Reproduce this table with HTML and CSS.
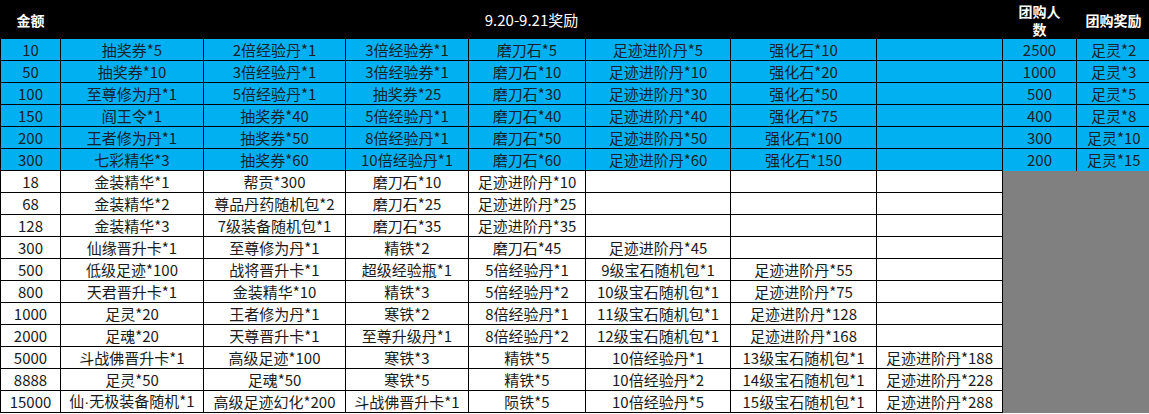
FILE: index.html
```html
<!DOCTYPE html>
<html lang="zh-CN">
<head>
<meta charset="utf-8">
<title>9.20-9.21奖励</title>
<link rel="stylesheet" href="styles.css">
</head>
<body>
<table class="sheet">
  <colgroup>
    <col class="c1"><col class="c2"><col class="c3"><col class="c4"><col class="c5"><col class="c6"><col class="c7"><col class="c8"><col class="c9"><col class="c10">
  </colgroup>
  <thead>
    <tr class="head">
      <th class="bold">金额</th>
      <th colspan="7" class="title">9.20-9.21奖励</th>
      <th class="bold twoline">团购人<br>数</th>
      <th class="bold">团购奖励</th>
    </tr>
  </thead>
  <tbody>
    <tr class="blue"><td>10</td><td>抽奖券*5</td><td>2倍经验丹*1</td><td>3倍经验券*1</td><td>磨刀石*5</td><td>足迹进阶丹*5</td><td>强化石*10</td><td></td><td>2500</td><td class="last">足灵*2</td></tr>
    <tr class="blue"><td>50</td><td>抽奖券*10</td><td>3倍经验丹*1</td><td>3倍经验券*1</td><td>磨刀石*10</td><td>足迹进阶丹*10</td><td>强化石*20</td><td></td><td>1000</td><td class="last">足灵*3</td></tr>
    <tr class="blue"><td>100</td><td>至尊修为丹*1</td><td>5倍经验丹*1</td><td>抽奖券*25</td><td>磨刀石*30</td><td>足迹进阶丹*30</td><td>强化石*50</td><td></td><td>500</td><td class="last">足灵*5</td></tr>
    <tr class="blue"><td>150</td><td>阎王令*1</td><td>抽奖券*40</td><td>5倍经验丹*1</td><td>磨刀石*40</td><td>足迹进阶丹*40</td><td>强化石*75</td><td></td><td>400</td><td class="last">足灵*8</td></tr>
    <tr class="blue"><td>200</td><td>王者修为丹*1</td><td>抽奖券*50</td><td>8倍经验丹*1</td><td>磨刀石*50</td><td>足迹进阶丹*50</td><td>强化石*100</td><td></td><td>300</td><td class="last">足灵*10</td></tr>
    <tr class="blue"><td>300</td><td>七彩精华*3</td><td>抽奖券*60</td><td>10倍经验丹*1</td><td>磨刀石*60</td><td>足迹进阶丹*60</td><td>强化石*150</td><td></td><td>200</td><td class="last">足灵*15</td></tr>
    <tr class="white"><td>18</td><td>金装精华*1</td><td>帮贡*300</td><td>磨刀石*10</td><td>足迹进阶丹*10</td><td></td><td></td><td></td><td class="gray" colspan="2" rowspan="11"></td></tr>
    <tr class="white"><td>68</td><td>金装精华*2</td><td>尊品丹药随机包*2</td><td>磨刀石*25</td><td>足迹进阶丹*25</td><td></td><td></td><td></td></tr>
    <tr class="white"><td>128</td><td>金装精华*3</td><td>7级装备随机包*1</td><td>磨刀石*35</td><td>足迹进阶丹*35</td><td></td><td></td><td></td></tr>
    <tr class="white"><td>300</td><td>仙缘晋升卡*1</td><td>至尊修为丹*1</td><td>精铁*2</td><td>磨刀石*45</td><td>足迹进阶丹*45</td><td></td><td></td></tr>
    <tr class="white"><td>500</td><td>低级足迹*100</td><td>战将晋升卡*1</td><td>超级经验瓶*1</td><td>5倍经验丹*1</td><td>9级宝石随机包*1</td><td>足迹进阶丹*55</td><td></td></tr>
    <tr class="white"><td>800</td><td>天君晋升卡*1</td><td>金装精华*10</td><td>精铁*3</td><td>5倍经验丹*2</td><td>10级宝石随机包*1</td><td>足迹进阶丹*75</td><td></td></tr>
    <tr class="white"><td>1000</td><td>足灵*20</td><td>王者修为丹*1</td><td>寒铁*2</td><td>8倍经验丹*1</td><td>11级宝石随机包*1</td><td>足迹进阶丹*128</td><td></td></tr>
    <tr class="white"><td>2000</td><td>足魂*20</td><td>天尊晋升卡*1</td><td>至尊升级丹*1</td><td>8倍经验丹*2</td><td>12级宝石随机包*1</td><td>足迹进阶丹*168</td><td></td></tr>
    <tr class="white"><td>5000</td><td>斗战佛晋升卡*1</td><td>高级足迹*100</td><td>寒铁*3</td><td>精铁*5</td><td>10倍经验丹*1</td><td>13级宝石随机包*1</td><td>足迹进阶丹*188</td></tr>
    <tr class="white"><td>8888</td><td>足灵*50</td><td>足魂*50</td><td>寒铁*5</td><td>精铁*5</td><td>10倍经验丹*2</td><td>14级宝石随机包*1</td><td>足迹进阶丹*228</td></tr>
    <tr class="white"><td>15000</td><td>仙<span class="dot">·</span>无极装备随机*1</td><td>高级足迹幻化*200</td><td>斗战佛晋升卡*1</td><td>陨铁*5</td><td>10倍经验丹*5</td><td>15级宝石随机包*1</td><td>足迹进阶丹*288</td></tr>
  </tbody>
</table>
</body>
</html>
```

FILE: styles.css
```css
html, body {
  margin: 0;
  padding: 0;
  background: #ffffff;
  overflow: hidden;
}

.sheet {
  border-collapse: collapse;
  table-layout: fixed;
  width: 1150px;
  font-family: "Noto Sans CJK SC", "Noto Sans", sans-serif;
  font-size: 15px;
  color: #1a1a1a;
}

.c1 { width: 60px; }
.c2 { width: 143px; }
.c3 { width: 142px; }
.c4 { width: 123px; }
.c5 { width: 117px; }
.c6 { width: 145px; }
.c7 { width: 146px; }
.c8 { width: 126px; }
.c9 { width: 74px; }
.c10 { width: 74px; }

.sheet th,
.sheet td {
  border: 1px solid #000;
  padding: 0;
  text-align: center;
  vertical-align: middle;
  white-space: nowrap;
  overflow: hidden;
  line-height: 20px;
}

.dot {
  font-family: "Liberation Sans", sans-serif;
}

.head th {
  background: #000;
  color: #fff;
  height: 37px;
  font-size: 15px;
  font-weight: normal;
}

.head th.bold {
  font-weight: bold;
  font-size: 14px;
}

.head th.twoline {
  line-height: 18px;
}

.head th.title {
  font-size: 15px;
}

.blue td {
  background: #00b0f0;
  height: 21px;
  color: #16222c;
}

.white td {
  background: #fff;
  height: 21px;
}

.blue td.last {
  border-right: none;
}

.white td.gray {
  background: #808080;
  border-top: hidden;
  border-right: none;
  border-bottom: none;
}
```
